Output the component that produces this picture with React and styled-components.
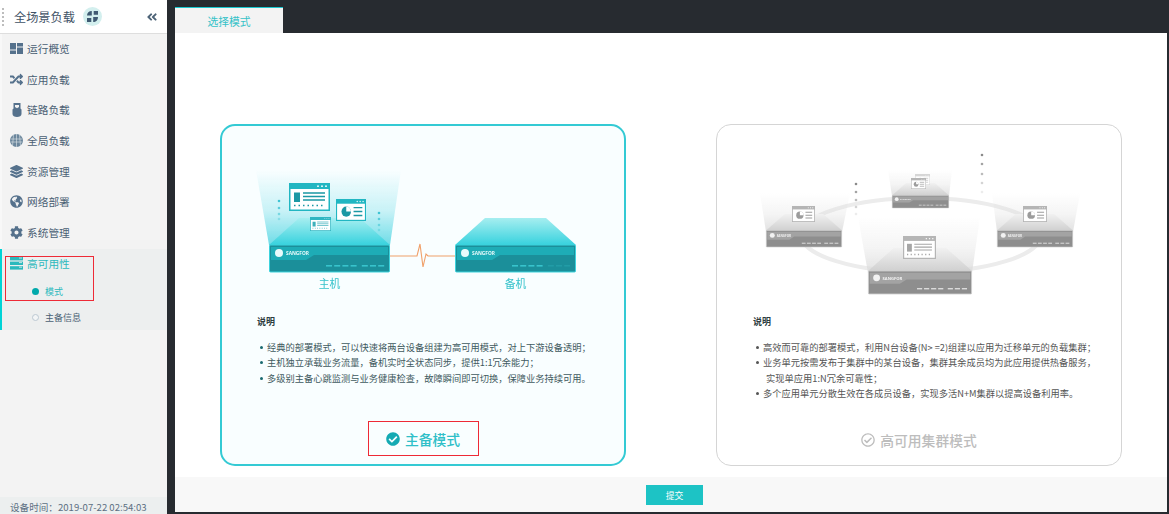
import React from 'react';
import styled, { createGlobalStyle } from 'styled-components';
import { FaRandom, FaLayerGroup, FaGlobeAmericas, FaCog, FaAngleDoubleLeft, FaCheckCircle, FaRegCheckCircle } from 'react-icons/fa';

const GlobalStyle = createGlobalStyle`
  html, body { margin: 0; padding: 0; height: 100%; overflow: hidden; }
  body { background: #272b30; font-family: "Noto Sans CJK SC", "Open Sans", sans-serif; }
  * { box-sizing: border-box; }
`

const Page = styled.div`
  display: flex;
  width: 1169px;
  height: 514px;
  background: #272b30;
`
const Sidebar = styled.aside`
  display: flex;
  flex-direction: column;
  width: 167px;
  background: #f3f3f3;
`
const Brand = styled.header`
  display: flex;
  align-items: center;
  height: 34px;
  padding: 0 9px 0 2px;
  background: #fff;
  border-bottom: 1px solid #dedede;
  color: #3f5266;
  font-size: 12.2px;
`
const Grip = styled.span`
  width: 2px;
  height: 18px;
  margin-right: 10px;
  border-left: 2px dotted #bdbdbd;
`
const BrandBadge = styled.span`
  display: flex;
  align-items: center;
  justify-content: center;
  width: 19px;
  height: 19px;
  margin-left: 8px;
  border-radius: 50%;
  background: #d3efee;
`
const Collapse = styled.span`
  display: flex;
  margin-left: auto;
  color: #4d6377;
  font-size: 12px;
`
const MenuRow = styled.div`
  display: flex;
  align-items: center;
  height: 30.7px;
  padding: 0 0 2px 8px;
  border-left: 2px solid #f8f8f8;
  color: #4a5f73;
  font-size: 10.7px;
`
const MenuIcon = styled.span`
  display: flex;
  align-items: center;
  justify-content: center;
  width: 13px;
  height: 13px;
  margin-right: 4px;
  color: #55718c;
  font-size: 13px;
`
const ActiveGroup = styled.section`
  height: 81px;
  padding: 7px 0 0 3px;
  background: #edefef;
  border-left: 2px solid #00d3d6;
`
const Highlight = styled.div`
  width: 89px;
  height: 45px;
  padding-left: 4px;
  border: 1px solid #ee2a36;
`
const GroupTitle = styled.div`
  display: flex;
  align-items: center;
  height: 14px;
  color: #2bb9bd;
  font-size: 10.7px;
`
const SubRow = styled.div`
  display: flex;
  align-items: center;
  height: 14px;
  margin-top: ${props => props.$first ? '14px' : '0'};
  padding-left: ${props => props.$first ? '22px' : '27px'};
  color: ${props => props.$active ? '#2bb9bd' : '#4a5f73'};
  font-size: 9px;
`
const OuterSub = styled.div`
  margin-top: 10px;
`
const Dot = styled.i`
  width: 7px;
  height: 7px;
  margin-right: 6px;
  border-radius: 50%;
  background: ${props => props.$active ? '#00a9ab' : '#f3f5f6'};
  border: ${props => props.$active ? '0' : '1.5px solid #bcc8d2'};
`
const Status = styled.footer`
  margin-top: auto;
  height: 17px;
  padding: 3px 0 0 10px;
  background: #ecefef;
  color: #5d7083;
  font-size: 9.6px;
  line-height: 14px;
  white-space: nowrap;
  overflow: hidden;
`
const Main = styled.main`
  display: flex;
  flex-direction: column;
  flex: 1;
  margin: 0 2px 2px 8px;
`
const TabBar = styled.nav`
  display: flex;
  align-items: flex-end;
  height: 33px;
`
const Tab = styled.div`
  display: flex;
  align-items: center;
  justify-content: center;
  width: 108px;
  height: 26px;
  background: #f3f3f3;
  border-top: 1px solid #19c8cf;
  color: #35c2c8;
  font-size: 10.8px;
`
const Content = styled.div`
  display: flex;
  justify-content: center;
  gap: 90px;
  height: 444px;
  padding-top: 91px;
  background: #fff;
`
const Card = styled.article`
  display: flex;
  flex-direction: column;
  width: 406px;
  height: 342px;
  padding-bottom: 8px;
  border-radius: 15px;
  border: ${props => props.$selected ? '2px solid #34cad4' : '1px solid #d5d5d5'};
  background: ${props => props.$selected ? '#f9feff' : '#fff'};
`
const Illustration = styled.svg`
  display: block;
  width: 402px;
  height: 188px;
  flex: none;
  margin-bottom: ${props => props.$selected ? '0' : '1px'};
  filter: blur(0.35px);
`
const Desc = styled.div`
  padding-left: ${props => props.$selected ? '35px' : '36px'};
  color: ${props => props.$selected ? '#3f5a60' : '#555'};
  font-size: 9.25px;
  line-height: 15.3px;
  white-space: nowrap;
`
const DescTitle = styled.h4`
  margin: 0 0 11px;
  color: #2d3c40;
  font-size: 9px;
  font-weight: 700;
  line-height: 15px;
`
const DescList = styled.ul`
  margin: 0;
  padding: 0;
  list-style: none;
`
const DescItem = styled.li`
  position: relative;
  padding-left: 10px;
  &::before {
    content: "";
    position: absolute;
    left: 3px;
    top: 6px;
    width: 3px;
    height: 3px;
    border-radius: 50%;
    background: ${props => props.$selected ? '#1a6a70' : '#555'};
  }
`
const Wrapped = styled.span`
  display: block;
  padding-left: 3px;
`
const ModeLabel = styled.div`
  display: flex;
  align-items: center;
  justify-content: center;
  gap: 5px;
  width: 111px;
  height: 35px;
  margin: auto auto 0;
  border: 1px solid ${props => props.$selected ? '#ee2a36' : 'transparent'};
  color: ${props => props.$selected ? '#2fbfc8' : '#bdbdbd'};
  font-size: 13.8px;
  font-weight: 500;
  white-space: nowrap;
  svg { flex: none; font-size: 14px; color: ${props => props.$selected ? '#14aab3' : '#bdbdbd'}; }
`
const Bottom = styled.div`
  display: flex;
  justify-content: center;
  align-items: flex-start;
  flex: 1;
  padding: 8px 0 0 7px;
  background: #f8f8f8;
`
const Submit = styled.button`
  width: 57px;
  height: 20px;
  padding: 0;
  border: 0;
  background: #1dc3c5;
  color: #fff;
  font-family: inherit;
  font-size: 8.8px;
`

const DashIcon = () => (
  <svg width="13" height="11" viewBox="0 0 13 11" fill="currentColor">
    <rect x="0" y="0" width="6" height="6.5" />
    <rect x="7" y="0" width="6" height="3.5" />
    <rect x="0" y="7.5" width="6" height="3.5" />
    <rect x="7" y="4.5" width="6" height="6.5" />
  </svg>
)
const PlugIcon = () => (
  <svg width="10" height="14" viewBox="0 0 10 14" fill="currentColor">
    <path d="M1.5 0h7v5.5l1 1V11c0 2-2 3-4.500 3S.5 13 .5 11V6.500l1-1z" />
    <path d="M3 2h4v2L5 5.200 3 4z" fill="#f3f3f3" />
  </svg>
)
const WwwIcon = () => (
  <svg width="13" height="13" viewBox="0 0 13 13">
    <circle cx="6.500" cy="6.500" r="6.500" fill="#6b869c" />
    <path d="M1 5h11M1 8h11M6.500 0v13M3.500 1l-1 11M9.500 1l1 11" stroke="#dfe6ea" strokeWidth=".6" fill="none" />
  </svg>
)
const RackIcon = () => (
  <svg width="13" height="13" viewBox="0 0 13 13" fill="#2bb9bd">
    <rect x="0" y="0" width="13" height="3.400" />
    <rect x="0" y="4.600" width="13" height="3.400" />
    <rect x="0" y="9.200" width="13" height="3.400" />
    <path d="M9 1h3M9 5.600h3M9 10.200h3" stroke="#edefef" strokeWidth=".8" />
  </svg>
)
const BadgeIcon = () => (
  <svg width="11" height="11" viewBox="0 0 11 11" fill="#3f5a72">
    <path d="M0 4.500 C0 2 2 0 4.800 0V4.500zM6.700 0H11V3.800H6.700zM0 7H4.300V11H0zM6.200 6H11C11 9 9 11 6.200 11z" />
  </svg>
)

const teal = {
  id: 't',
  beam: '#55d6e3',
  topA: '#a6eef0',
  topB: '#37d2de',
  edge: '#3ed3dd',
  upper: '#1eacb6',
  lower: '#1b8f9a',
  mark: '#e8fbfc',
  light: '#38c3cc',
}
const gray = {
  id: 'g',
  beam: '#dcdcdc',
  topA: '#f1f1f1',
  topB: '#d0d0d0',
  edge: '#cfcfcf',
  upper: '#a3a3a3',
  lower: '#8e8e8e',
  mark: '#f2f2f2',
  light: '#dedede',
}

const Gradients = ({ p }) => (
  <defs>
    <linearGradient id={`${p.id}-beam`} x1="0" y1="0" x2="0" y2="1">
      <stop offset="0" stopColor={p.beam} stopOpacity="0" />
      <stop offset=".55" stopColor={p.beam} stopOpacity=".3" />
      <stop offset="1" stopColor={p.beam} stopOpacity=".85" />
    </linearGradient>
    <linearGradient id={`${p.id}-top`} x1="0" y1="0" x2="0" y2="1">
      <stop offset="0" stopColor={p.topA} />
      <stop offset="1" stopColor={p.topB} />
    </linearGradient>
  </defs>
)

// drawn at 121x54 (lid + front), scaled to each use
const Server = ({ p, x, y, w, h, lights = 7, dim = 0 }) => {
  const sx = w / 121
  const sy = h / 54
  return (
    <g transform={`translate(${x} ${y}) scale(${sx} ${sy})`}>
      <path d="M0 27 30 0H91L121 27z" fill={`url(#${p.id}-top)`} />
      <rect x=".5" y="27" width="120" height="27" rx="1" fill={p.lower} stroke={p.edge} />
      <path d="M2 29H119V37H45L37 42H2z" fill={p.upper} />
      <circle cx="10" cy="35" r="4" fill={p.mark} />
      <text x="17" y="37" fontSize="4.800" fontWeight="700" fill={p.mark} fontFamily="Open Sans, sans-serif">SANGFOR</text>
      {Array.from({ length: lights }).map((_, i) => (
        <rect
          key={i}
          x={57 + i * 8.200 + (i > 3 ? 3 : 0)}
          y="47"
          width="6"
          height="1.600"
          fill={p.light}
          opacity={i >= lights - dim ? 0.25 : 1}
        />
      ))}
    </g>
  )
}

const Beam = ({ p, points }) => <polygon points={points} fill={`url(#${p.id}-beam)`} />

const Dots = ({ x, ys, color }) => ys.map((y, i) => (
  <circle key={i} cx={x} cy={y} r={1.300} fill={color} opacity={1 - i * 0.21} />
))

const Win = ({ x, y, w, h, kind, frame, ink }) => (
  <g transform={`translate(${x} ${y}) scale(${w / 41} ${h / 28})`}>
    <rect width="41" height="28" fill={frame} />
    <rect x="1.500" y="6" width="38" height="20.500" fill="#fff" />
    <circle cx="29" cy="3.200" r=".9" fill="#fff" />
    <circle cx="33" cy="3.200" r=".9" fill="#fff" />
    <circle cx="37" cy="3.200" r=".9" fill="#fff" />
    {kind === 'list' ? (
      <>
        <rect x="5" y="9.500" width="6" height="9.500" fill={ink} />
        <path d="M14 10h22M14 13.500h22M14 17h22" stroke={ink} strokeWidth="1.400" />
        <path d="M5 22.500h31" stroke={ink} strokeWidth="1.600" strokeDasharray="1.500 3" />
      </>
    ) : (
      <>
        <circle cx="14" cy="16" r="6.500" fill={ink} />
        <path d="M14 16V9.500A6.500 6.500 0 0 1 20.500 16z" fill="#fff" />
        <path d="M24 11h12M24 16h12M24 21h12" stroke={ink} strokeWidth="1.800" />
      </>
    )}
  </g>
)

const ActiveArt = () => (
  <Illustration $selected viewBox="223 126 402 188">
    <Gradients p={teal} />
    <Beam p={teal} points="257,170 402,170 391,245 270,245" />
    <Server p={teal} x={270} y={218} w={121} h={54} />
    <Server p={teal} x={456} y={218} w={121} h={54} dim={3} />
    <Win x={290} y={183} w={41} h={28} kind="list" frame="#21b6c2" ink="#1b98a4" />
    <Win x={337} y={199} w={30} h={22} kind="pie" frame="#21b6c2" ink="#1b98a4" />
    <Win x={311} y={217} w={21} h={14} kind="list" frame="#2fb6c2" ink="#3fb0bb" />
    <Dots x={280} ys={[201, 208, 214, 219]} color="#3fc4d4" />
    <Dots x={380} ys={[213, 219, 225, 230]} color="#3fc4d4" />
    <path d="M391 256H418L421 244 424 267 427 254 429 256H456" fill="none" stroke="#f0a06a" strokeWidth="1.100" />
    <text x="330.500" y="288" fontSize="10.800" fill="#35c2cb" textAnchor="middle">主机</text>
    <text x="516.500" y="288" fontSize="10.800" fill="#35c2cb" textAnchor="middle">备机</text>
  </Illustration>
)

const ClusterArt = () => (
  <Illustration viewBox="717 125 402 188">
    <Gradients p={gray} />
    <ellipse cx="921" cy="235" rx="120" ry="37" fill="none" stroke="#ececec" strokeWidth="4" />
    <Beam p={gray} points="888,170 952,170 949,196 892,196" />
    <Server p={gray} x={892} y={183} w={57} h={25} />
    <Win x={915} y={174} w={15} h={11} kind="pie" frame="#d6d6d6" ink="#bbb" />
    <Win x={911} y={178} w={15} h={11} kind="pie" frame="#b5b5b5" ink="#9c9c9c" />
    <Beam p={gray} points="760,193 850,193 842,232 766,232" />
    <Server p={gray} x={766} y={214} w={76} h={33} />
    <Win x={792} y={206} w={23} h={16} kind="pie" frame="#b5b5b5" ink="#9c9c9c" />
    <Beam p={gray} points="992,193 1080,193 1073,232 997,232" />
    <Server p={gray} x={997} y={214} w={76} h={33} />
    <Win x={1023} y={206} w={24} h={16} kind="pie" frame="#b5b5b5" ink="#9c9c9c" />
    <Beam p={gray} points="858,217 980,217 972,273 868,273" />
    <Server p={gray} x={868} y={248} w={104} h={46} />
    <Win x={903} y={236} w={33} h={23} kind="list" frame="#b5b5b5" ink="#a6a6a6" />
    <Dots x={856} ys={[184, 192, 200, 207, 214]} color="#8a8a8a" />
    <Dots x={982} ys={[155, 164, 174, 183, 192]} color="#8a8a8a" />
  </Illustration>
)

const menu = [
  { label: '运行概览', icon: <DashIcon /> },
  { label: '应用负载', icon: <FaRandom /> },
  { label: '链路负载', icon: <PlugIcon /> },
  { label: '全局负载', icon: <WwwIcon /> },
  { label: '资源管理', icon: <FaLayerGroup /> },
  { label: '网络部署', icon: <FaGlobeAmericas /> },
  { label: '系统管理', icon: <FaCog /> },
]

const App = () => (
  <Page>
    <GlobalStyle />
    <Sidebar>
      <Brand>
        <Grip />
        全场景负载
        <BrandBadge><BadgeIcon /></BrandBadge>
        <Collapse><FaAngleDoubleLeft /></Collapse>
      </Brand>
      {menu.map(item => (
        <MenuRow key={item.label}>
          <MenuIcon>{item.icon}</MenuIcon>
          {item.label}
        </MenuRow>
      ))}
      <ActiveGroup>
        <Highlight>
          <GroupTitle>
            <MenuIcon><RackIcon /></MenuIcon>
            高可用性
          </GroupTitle>
          <SubRow $first $active><Dot $active />模式</SubRow>
        </Highlight>
        <OuterSub>
          <SubRow><Dot />主备信息</SubRow>
        </OuterSub>
      </ActiveGroup>
      <Status>设备时间：2019-07-22 02:54:03</Status>
    </Sidebar>
    <Main>
      <TabBar>
        <Tab>选择模式</Tab>
      </TabBar>
      <Content>
        <Card $selected>
          <ActiveArt />
          <Desc $selected>
            <DescTitle>说明</DescTitle>
            <DescList>
              <DescItem $selected>经典的部署模式，可以快速将两台设备组建为高可用模式，对上下游设备透明；</DescItem>
              <DescItem $selected>主机独立承载业务流量，备机实时全状态同步，提供1:1冗余能力；</DescItem>
              <DescItem $selected>多级别主备心跳监测与业务健康检查，故障瞬间即可切换，保障业务持续可用。</DescItem>
            </DescList>
          </Desc>
          <ModeLabel $selected><FaCheckCircle />主备模式</ModeLabel>
        </Card>
        <Card>
          <ClusterArt />
          <Desc>
            <DescTitle>说明</DescTitle>
            <DescList>
              <DescItem>高效而可靠的部署模式，利用N台设备(N&gt; =2)组建以应用为迁移单元的负载集群；</DescItem>
              <DescItem>
                业务单元按需发布于集群中的某台设备，集群其余成员均为此应用提供热备服务，
                <Wrapped>实现单应用1:N冗余可靠性；</Wrapped>
              </DescItem>
              <DescItem>多个应用单元分散生效在各成员设备，实现多活N+M集群以提高设备利用率。</DescItem>
            </DescList>
          </Desc>
          <ModeLabel><FaRegCheckCircle />高可用集群模式</ModeLabel>
        </Card>
      </Content>
      <Bottom>
        <Submit>提交</Submit>
      </Bottom>
    </Main>
  </Page>
)

export default App;
